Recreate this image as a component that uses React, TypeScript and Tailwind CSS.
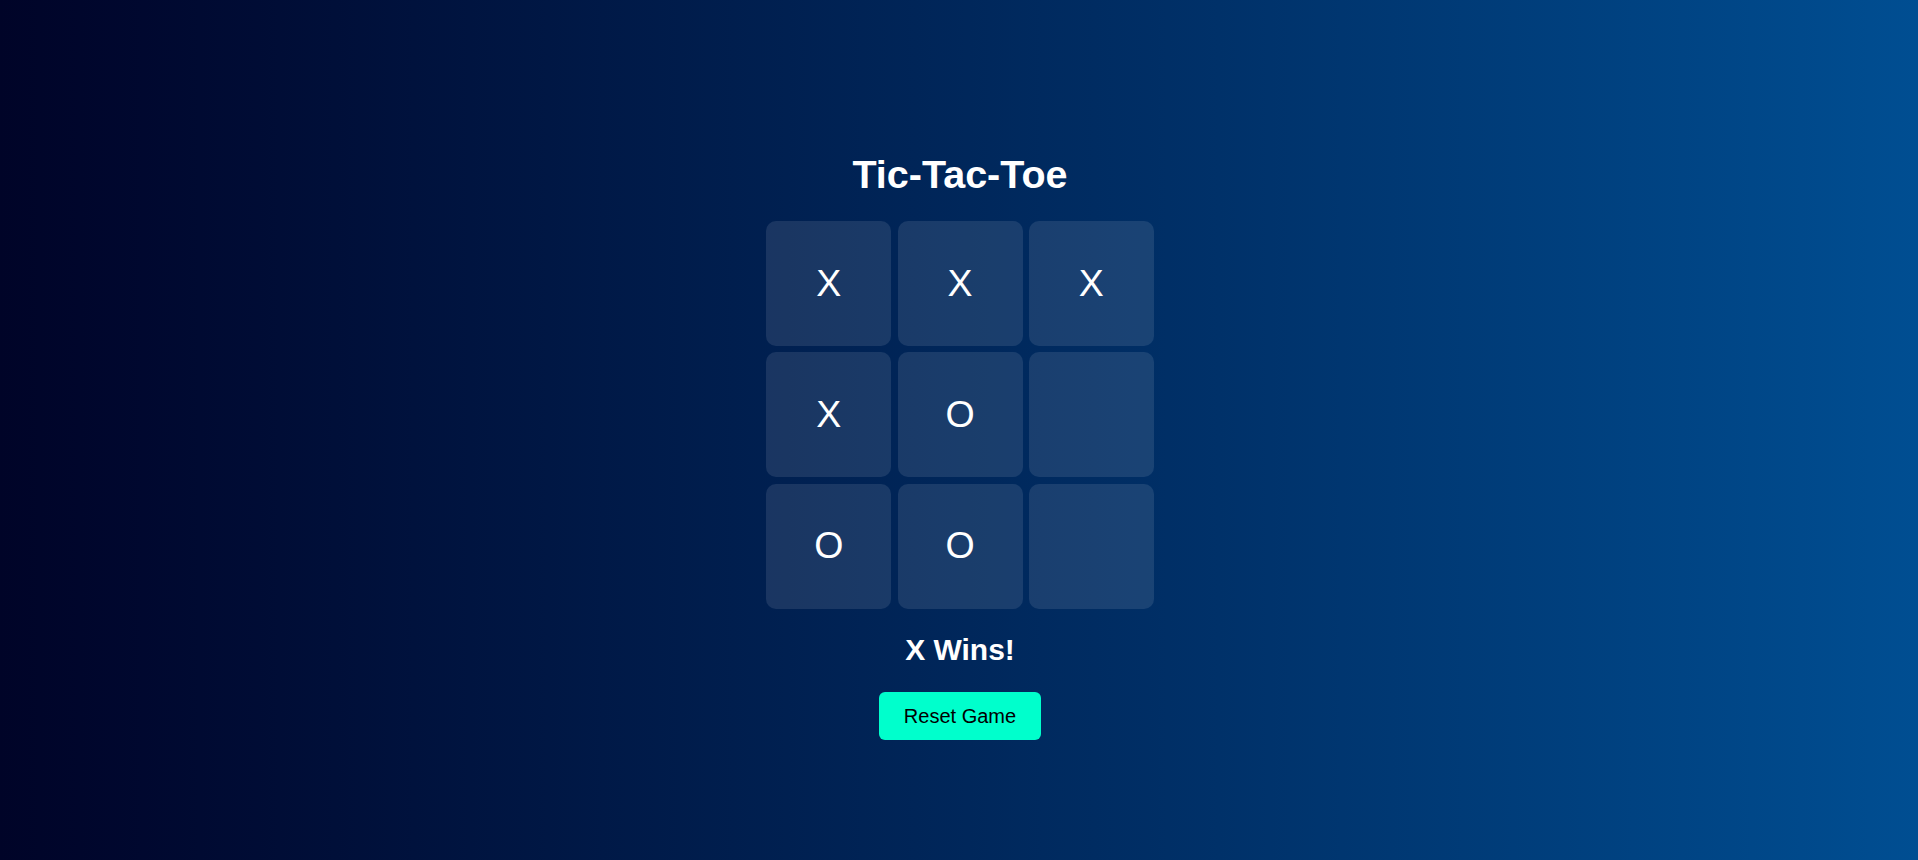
import React from "react";

const board = ["X", "X", "X", "X", "O", "", "O", "O", ""];

export default function App() {
  return (
    <div
      className="w-full min-h-screen h-[860px] bg-gradient-to-r from-[#000428] to-[#004e92] flex flex-col items-center pt-[151px] pl-[2px] text-white"
      style={{ fontFamily: '"Liberation Sans", Arial, sans-serif' }}
    >
      <h1 className="text-[39.5px] font-bold leading-[46px] m-0">Tic-Tac-Toe</h1>
      <div className="mt-[24px] grid grid-cols-[repeat(3,125px)] grid-rows-[repeat(3,125px)] gap-[6.25px]">
        {board.map((v, i) => (
          <div
            key={i}
            className="bg-white/10 rounded-[10px] flex items-center justify-center text-[37.5px] leading-none cursor-pointer"
          >
            {v}
          </div>
        ))}
      </div>
      <h2 className="mt-[24px] text-[30px] font-bold leading-[34.5px]">X Wins!</h2>
      <button className="mt-[25px] bg-[#00ffcc] text-black text-[20px] leading-[23px] px-[25px] py-[12.5px] rounded-[6px] border-0 cursor-pointer">
        Reset Game
      </button>
    </div>
  );
}
